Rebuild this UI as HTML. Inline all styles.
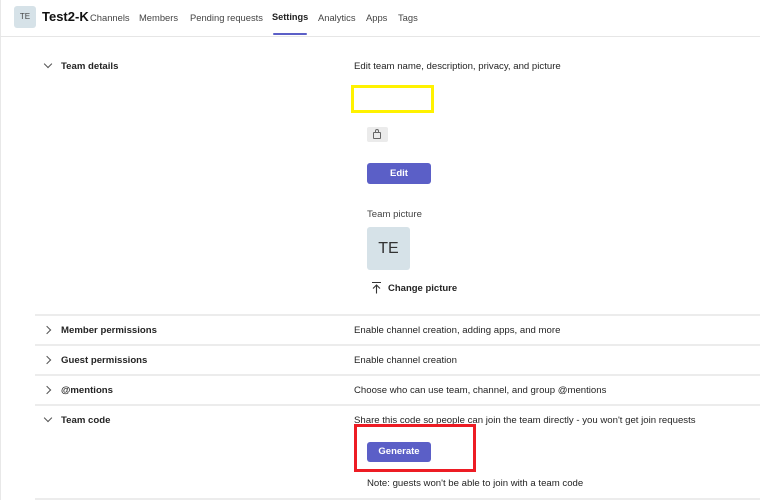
<!DOCTYPE html>
<html><head><style>
*{margin:0;padding:0;box-sizing:border-box}
body{width:760px;height:500px;background:#fff;font-family:"Liberation Sans",sans-serif;color:#242424;position:relative;overflow:hidden;font-size:9.6px}
.a{position:absolute;white-space:nowrap}
.hdr{position:absolute;left:0;top:0;width:760px;height:37px;border-bottom:1px solid #e6e6e6}
.line{position:absolute;left:35px;width:725px;height:2px;background:#ececec}
.b{font-weight:bold}
.btn{position:absolute;background:#5b5fc7;color:#fff;font-weight:bold;font-size:9.5px;text-align:center;border-radius:3px}
.chev{position:absolute;width:6px;height:6px;border-right:1px solid #555;border-bottom:1px solid #555}
.t{top:12px;color:#444;font-size:9.4px}
</style></head><body>
<div style="position:absolute;left:0;top:0;width:1px;height:500px;background:#e8e8e8"></div>
<div class="hdr"></div>
<div class="a" style="left:14px;top:6px;width:22px;height:22px;background:#d6e2e8;border-radius:3px;font-size:8px;text-align:center;line-height:22px;color:#444">TE</div>
<div class="a b" style="left:42px;top:9px;font-size:13px;color:#111">Test2-K</div>
<div class="a t" style="left:90px">Channels</div>
<div class="a t" style="left:139px">Members</div>
<div class="a t" style="left:190px">Pending requests</div>
<div class="a b t" style="left:272px;color:#222;font-size:9.2px">Settings</div>
<div style="position:absolute;left:273px;top:33px;width:34px;height:2px;background:#5b5fc7;border-radius:1px"></div>
<div class="a t" style="left:318px">Analytics</div>
<div class="a t" style="left:366px">Apps</div>
<div class="a t" style="left:398px">Tags</div>

<div class="chev" style="left:45px;top:61px;transform:rotate(45deg)"></div>
<div class="a b" style="left:61px;top:61px">Team details</div>
<div class="a" style="left:354px;top:61px">Edit team name, description, privacy, and picture</div>
<div class="a" style="left:351px;top:85px;width:83px;height:28px;border:3px solid #fff200"></div>
<div class="a" style="left:367px;top:127px;width:21px;height:15px;background:#ebebeb;border-radius:2px"></div>
<div class="a" style="left:373px;top:132px;width:8px;height:7px;border:1px solid #666;border-radius:1px"></div>
<div class="a" style="left:375px;top:129px;width:4px;height:4px;border:1px solid #666;border-bottom:none;border-radius:2px 2px 0 0"></div>
<div class="btn" style="left:367px;top:163px;width:64px;height:21px;line-height:21px">Edit</div>
<div class="a" style="left:367px;top:209px;color:#444">Team picture</div>
<div class="a" style="left:367px;top:227px;width:43px;height:43px;background:#d6e2e8;border-radius:3px;text-align:center;line-height:43px;font-size:16px;color:#333">TE</div>
<svg class="a" style="left:371px;top:281px" width="11" height="13" viewBox="0 0 11 13"><path d="M1 1.5H10M5.5 4V12.5M2 7.5L5.5 4L9 7.5" stroke="#333" stroke-width="1.1" fill="none"/></svg>
<div class="a b" style="left:388px;top:283px;font-size:9.5px">Change picture</div>

<div class="line" style="top:314px"></div>
<div class="chev" style="left:44px;top:327px;transform:rotate(-45deg)"></div>
<div class="a b" style="left:61px;top:325px">Member permissions</div>
<div class="a" style="left:354px;top:325px">Enable channel creation, adding apps, and more</div>
<div class="line" style="top:344px"></div>
<div class="chev" style="left:44px;top:357px;transform:rotate(-45deg)"></div>
<div class="a b" style="left:61px;top:355px">Guest permissions</div>
<div class="a" style="left:354px;top:355px">Enable channel creation</div>
<div class="line" style="top:374px"></div>
<div class="chev" style="left:44px;top:387px;transform:rotate(-45deg)"></div>
<div class="a b" style="left:61px;top:385px">@mentions</div>
<div class="a" style="left:354px;top:385px">Choose who can use team, channel, and group @mentions</div>
<div class="line" style="top:404px"></div>
<div class="chev" style="left:45px;top:415px;transform:rotate(45deg)"></div>
<div class="a b" style="left:61px;top:415px">Team code</div>
<div class="a" style="left:354px;top:415px">Share this code so people can join the team directly - you won't get join requests</div>
<div class="btn" style="left:367px;top:442px;width:64px;height:20px;line-height:20px">Generate</div>
<div class="a" style="left:354px;top:424px;width:122px;height:48px;border:3px solid #ed1c24"></div>
<div class="a" style="left:367px;top:478px">Note: guests won't be able to join with a team code</div>
<div class="line" style="top:498px"></div>
</body></html>
